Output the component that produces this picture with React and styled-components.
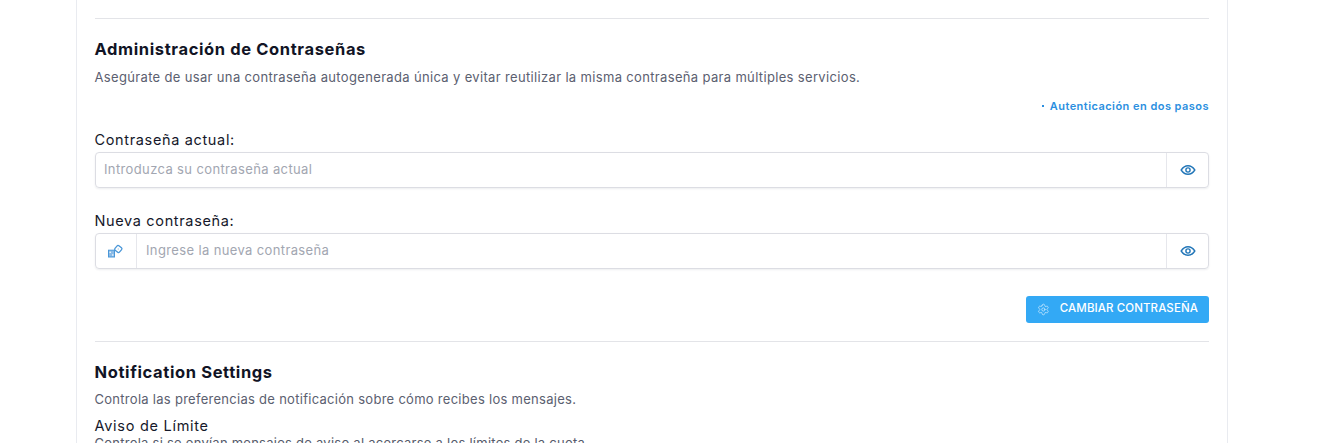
import React from "react";
import styled, {createGlobalStyle} from "styled-components";
import {Settings} from "lucide-react";

const GlobalStyle = createGlobalStyle`
  html, body {
    margin: 0;
    height: 443px;
    overflow: hidden;
    background: #fff;
    font-family: "Inter", "Liberation Sans", sans-serif;
  }
  * {
    box-sizing: border-box;
  }
`

const Card = styled.div`
  width: 1152px;
  height: 443px;
  margin-left: 76px;
  padding: 18px 18px 0;
  border-left: 1px solid #e9ebf0;
  border-right: 1px solid #e9ebf0;
  overflow: hidden;
`

const Divider = styled.hr`
  margin: ${({$top}) => $top || 0}px 0 0;
  border: 0;
  border-top: 1px solid #e3e4e8;
`

const Section = styled.section`
  display: flex;
  flex-direction: column;
`

const Title = styled.h2`
  margin: ${({$top}) => $top}px 0 0 -.5px;
  font-size: 16.5px;
  line-height: 20px;
  font-weight: 700;
  letter-spacing: .62px;
  color: #111425;
`

const Description = styled.p`
  margin: ${({$top}) => $top}px 0 0 -.5px;
  font-size: 13px;
  line-height: 16px;
  letter-spacing: ${({$spacing}) => $spacing}px;
  color: #5b6070;
`

const TwoStepLink = styled.a`
  align-self: flex-end;
  display: flex;
  align-items: center;
  margin-top: 14px;
  font-size: 11px;
  line-height: 14px;
  font-weight: 600;
  letter-spacing: .46px;
  color: #2b8fe0;

  &::before {
    content: "";
    width: 2px;
    height: 2px;
    margin-right: 6px;
    background: #2b8fe0;
  }
`

const Label = styled.label`
  display: block;
  margin: ${({$top}) => $top}px 0 0 -.5px;
  font-size: 14.5px;
  line-height: 18px;
  font-weight: 400;
  letter-spacing: .65px;
  color: #15182a;
`

const InputGroup = styled.div`
  display: flex;
  height: 36px;
  margin-top: 3px;
  border: 1px solid #dcdde3;
  border-radius: 4px;
  box-shadow: 0 1px 2px rgba(30, 35, 60, .08);
`

const Addon = styled.div`
  display: flex;
  align-items: center;
  justify-content: center;
  flex: none;
  width: ${({$width}) => $width}px;
  border-left: ${({$side}) => $side === "right" ? "1px solid #e6e7ec" : "0"};
  border-right: ${({$side}) => $side === "left" ? "1px solid #e6e7ec" : "0"};
`

const Input = styled.input`
  flex: 1;
  min-width: 0;
  height: 32px;
  padding: 0 9px 0 ${({$pad}) => $pad}px;
  border: 0;
  outline: 0;
  background: transparent;
  font: inherit;
  font-size: 13px;
  letter-spacing: .37px;
  color: #15182a;

  &::placeholder {
    color: #a2a6b1;
    opacity: 1;
  }
`

const Actions = styled.div`
  display: flex;
  justify-content: flex-end;
  margin-top: 27px;
`

const SubmitButton = styled.button`
  display: flex;
  align-items: center;
  gap: 10px;
  width: 183px;
  height: 27px;
  padding: 0 11px;
  border: 0;
  border-radius: 3px;
  background: #33a9f5;
  color: #fff;
  font: inherit;
  font-size: 11.5px;
  font-weight: 500;
  letter-spacing: .1px;
  white-space: nowrap;
`

const ButtonText = styled.span`
  padding-bottom: 3px;
`

const SettingName = styled.div`
  margin: 10px 0 0 -.5px;
  font-size: 14.5px;
  line-height: 18px;
  font-weight: 400;
  letter-spacing: .72px;
  color: #15182a;
`

const SettingHelp = styled.p`
  margin: 0 0 0 -.5px;
  font-size: 13px;
  line-height: 16px;
  letter-spacing: .25px;
  color: #555b6b;
`

const EyeIcon = () => (
    <svg width="16" height="16" viewBox="0 0 16 16" fill="none" stroke="#2276b8" strokeWidth="1.4">
        <path d="M1.2 8C3 5.2 5.3 3.8 8 3.8S13 5.2 14.8 8C13 10.8 10.7 12.2 8 12.2S3 10.8 1.2 8Z"/>
        <circle cx="8" cy="8" r="2.1"/>
    </svg>
)

const DiceIcon = () => (
    <svg width="16" height="14" viewBox="0 0 16 14" fill="none" stroke="#4a97d8" strokeWidth="1">
        <rect x=".5" y="6.2" width="6" height="6.8" fill="#8bbbe6"/>
        <circle cx="2.2" cy="8.2" r=".8" fill="#fff" stroke="none"/>
        <circle cx="4.8" cy="11" r=".8" fill="#fff" stroke="none"/>
        <rect x="7.4" y="2.1" width="5.8" height="5.8" rx="1.2" strokeWidth="1.3" transform="rotate(40 10.3 5)"/>
        <circle cx="10.3" cy="5" r=".8" fill="#a9cdee" stroke="none"/>
    </svg>
)

const App = () => {


    return (
        <>
            <GlobalStyle/>
            <Card>
                <Divider/>
                <Section>
                    <Title $top={20}>Administración de Contraseñas</Title>
                    <Description $top={10} $spacing={.34}>Asegúrate de usar una contraseña autogenerada única y evitar reutilizar la misma contraseña para múltiples servicios.</Description>
                    <TwoStepLink>Autenticación en dos pasos</TwoStepLink>
                </Section>
                <Label $top={18}>Contraseña actual:</Label>
                <InputGroup>
                    <Input $pad={8} placeholder="Introduzca su contraseña actual"/>
                    <Addon $side="right" $width={42}><EyeIcon/></Addon>
                </InputGroup>
                <Label $top={24}>Nueva contraseña:</Label>
                <InputGroup>
                    <Addon $side="left" $width={41}><DiceIcon/></Addon>
                    <Input $pad={9} placeholder="Ingrese la nueva contraseña"/>
                    <Addon $side="right" $width={42}><EyeIcon/></Addon>
                </InputGroup>
                <Actions>
                    <SubmitButton>
                        <Settings size={13} strokeWidth={1.2} color="#e4f4ff"/>
                        <ButtonText>CAMBIAR CONTRASEÑA</ButtonText>
                    </SubmitButton>
                </Actions>
                <Divider $top={18}/>
                <Section>
                    <Title $top={20}>Notification Settings</Title>
                    <Description $top={9} $spacing={.28}>Controla las preferencias de notificación sobre cómo recibes los mensajes.</Description>
                    <SettingName>Aviso de Límite</SettingName>
                    <SettingHelp>Controla si se envían mensajes de aviso al acercarse a los límites de la cuota</SettingHelp>
                </Section>
            </Card>
        </>
    )
}


export default App
